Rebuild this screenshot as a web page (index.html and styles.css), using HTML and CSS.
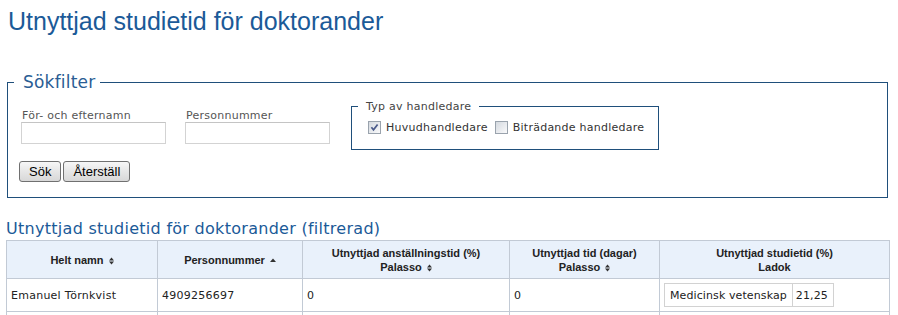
FILE: index.html
```html
<!DOCTYPE html>
<html lang="sv">
<head>
<meta charset="utf-8">
<title>Utnyttjad studietid för doktorander</title>
<link rel="stylesheet" href="styles.css">
</head>
<body>
<h1 class="page-title">Utnyttjad studietid för doktorander</h1>

<fieldset class="filter">
  <legend class="filter-legend">Sökfilter</legend>
  <div class="filter-row">
    <div class="field">
      <label class="field-label" for="name">För- och efternamn</label>
      <input class="text-input" id="name" type="text">
    </div>
    <div class="field">
      <label class="field-label" for="pnr">Personnummer</label>
      <input class="text-input" id="pnr" type="text">
    </div>
    <fieldset class="supervisor">
      <legend class="supervisor-legend">Typ av handledare</legend>
      <div class="check-row">
        <label class="check">
          <svg class="check-box" width="13" height="13" viewBox="0 0 13 13">
            <defs><linearGradient id="cb1" x1="0" y1="0" x2="1" y2="1"><stop offset="0" stop-color="#d3d8de"/><stop offset="1" stop-color="#fbfbfc"/></linearGradient></defs>
            <rect x="0.5" y="0.5" width="12" height="12" fill="url(#cb1)" stroke="#9aa3ad"/>
            <path d="M3.4 6.2 L5.5 8.8 L9.6 3.4" fill="none" stroke="#4a5a8a" stroke-width="1.7"/>
          </svg>
          <span>Huvudhandledare</span>
        </label>
        <label class="check">
          <svg class="check-box" width="13" height="13" viewBox="0 0 13 13">
            <defs><linearGradient id="cb2" x1="0" y1="0" x2="1" y2="1"><stop offset="0" stop-color="#d3d8de"/><stop offset="1" stop-color="#fbfbfc"/></linearGradient></defs>
            <rect x="0.5" y="0.5" width="12" height="12" fill="url(#cb2)" stroke="#9aa3ad"/>
          </svg>
          <span>Biträdande handledare</span>
        </label>
      </div>
    </fieldset>
  </div>
  <div class="buttons">
    <button class="btn" type="button">Sök</button>
    <button class="btn" type="button">Återställ</button>
  </div>
</fieldset>

<h2 class="section-title">Utnyttjad studietid för doktorander (filtrerad)</h2>

<table class="results">
  <colgroup>
    <col class="c1"><col class="c2"><col class="c3"><col class="c4"><col class="c5">
  </colgroup>
  <thead>
    <tr>
      <th>Helt namn <svg class="sort" width="5" height="8" viewBox="0 0 5 8"><polygon points="0,3.5 2.5,0.5 5,3.5"/><polygon points="0,4.5 5,4.5 2.5,7.5"/></svg></th>
      <th>Personnummer <svg class="sort" width="6" height="8" viewBox="0 0 6 8"><polygon points="0,5 3,1.5 6,5"/></svg></th>
      <th>Utnyttjad anställningstid (%)<br>Palasso <svg class="sort" width="5" height="8" viewBox="0 0 5 8"><polygon points="0,3.5 2.5,0.5 5,3.5"/><polygon points="0,4.5 5,4.5 2.5,7.5"/></svg></th>
      <th>Utnyttjad tid (dagar)<br>Palasso <svg class="sort" width="5" height="8" viewBox="0 0 5 8"><polygon points="0,3.5 2.5,0.5 5,3.5"/><polygon points="0,4.5 5,4.5 2.5,7.5"/></svg></th>
      <th>Utnyttjad studietid (%)<br>Ladok</th>
    </tr>
  </thead>
  <tbody>
    <tr>
      <td>Emanuel Törnkvist</td>
      <td>4909256697</td>
      <td>0</td>
      <td>0</td>
      <td>
        <table class="ladok">
          <tr><td>Medicinsk vetenskap</td><td>21,25</td></tr>
        </table>
      </td>
    </tr>
    <tr class="next">
      <td>&nbsp;</td><td>&nbsp;</td><td>&nbsp;</td><td>&nbsp;</td><td>&nbsp;</td>
    </tr>
  </tbody>
</table>
</body>
</html>
```

FILE: styles.css
```css
html, body {
  margin: 0;
  padding: 0;
  background: #ffffff;
}

body {
  font-family: "DejaVu Sans", Verdana, sans-serif;
  font-size: 11px;
  letter-spacing: 0.25px;
  color: #333333;
}

.page-title {
  margin: 7px 0 0 8px;
  font-family: "Liberation Sans", Arial, sans-serif;
  font-weight: normal;
  font-size: 25px;
  line-height: 28px;
  letter-spacing: 0;
  color: #1b5a98;
}

.filter {
  margin: 38px 0 0 7px;
  width: 881px;
  box-sizing: border-box;
  border: 1px solid #1f4f7b;
  padding: 0 13px 15px 13px;
  min-width: 0;
}

.filter-legend {
  font-size: 17px;
  line-height: 18px;
  letter-spacing: 0.2px;
  color: #2a5d94;
  padding: 0 5px 0 9px;
  margin-left: -7px;
}

.filter-row {
  display: flex;
  align-items: flex-start;
  padding-top: 9px;
}

.field {
  display: flex;
  flex-direction: column;
  width: 145px;
  margin-top: 9px;
  margin-right: 19px;
}

.field:nth-child(2) {
  margin-right: 21px;
}

.field-label {
  line-height: 13px;
  padding-left: 1px;
  color: #555555;
}

.text-input {
  box-sizing: border-box;
  width: 145px;
  height: 22px;
  margin: 0;
  border: 1px solid #d3d3d3;
  border-top-color: #c4c4c4;
  background: #ffffff;
  font-family: "DejaVu Sans", Verdana, sans-serif;
  font-size: 11px;
}

.supervisor {
  margin: 0;
  width: 308px;
  box-sizing: border-box;
  border: 1px solid #1f4f7b;
  padding: 0 0 14px 16px;
  min-width: 0;
}

.supervisor-legend {
  line-height: 13px;
  color: #444444;
  padding: 0 8px;
  margin-left: -10px;
}

.check-row {
  display: flex;
  align-items: center;
  margin-top: 7px;
  line-height: 15px;
  white-space: nowrap;
}

.check {
  display: flex;
  align-items: center;
  flex: none;
  gap: 5px;
  margin-right: 7px;
  color: #333333;
  white-space: nowrap;
}

.check-box {
  display: block;
  flex: none;
}

.buttons {
  display: flex;
  gap: 2px;
  margin: 11px 0 0 -2px;
}

.btn {
  height: 21px;
  margin: 0;
  padding: 0 9px;
  font-family: "Liberation Sans", Arial, sans-serif;
  font-size: 13px;
  line-height: 19px;
  letter-spacing: 0;
  color: #000000;
  border: 1px solid #707070;
  border-radius: 3px;
  background: linear-gradient(#f7f7f7, #e6e6e6 50%, #d8d8d8);
}

.section-title {
  margin: 21px 0 2px 6px;
  font-size: 16px;
  line-height: 19px;
  letter-spacing: 0.28px;
  font-weight: normal;
  color: #1b5a98;
}

.results {
  margin-left: 6px;
  width: 883px;
  border-collapse: collapse;
  table-layout: fixed;
}

.c1 { width: 151px; }
.c2 { width: 145px; }
.c3 { width: 207px; }
.c4 { width: 150px; }
.c5 { width: 230px; }

.results th {
  height: 37px;
  padding: 0 4px;
  background: #e9f1fb;
  border: 1px solid #c2cad5;
  font-family: "Liberation Sans", Arial, sans-serif;
  font-size: 11px;
  font-weight: bold;
  line-height: 14px;
  letter-spacing: 0;
  color: #222222;
  text-align: center;
  vertical-align: middle;
}

.sort {
  display: inline-block;
  vertical-align: -1px;
  margin-left: 2px;
  fill: #333333;
}

.results > tbody > tr > td {
  height: 32px;
  padding: 0 4px;
  border: 1px solid #c2cad5;
  color: #222222;
  vertical-align: middle;
  text-align: left;
}

.ladok {
  border-collapse: collapse;
  height: 24px;
}

.ladok td {
  border: 1px solid #d2d2d2;
  padding: 0 5px 0 5px;
  letter-spacing: 0.1px;
  color: #222222;
  white-space: nowrap;
}

.ladok td + td {
  padding: 0 5px 0 3px;
}
```
